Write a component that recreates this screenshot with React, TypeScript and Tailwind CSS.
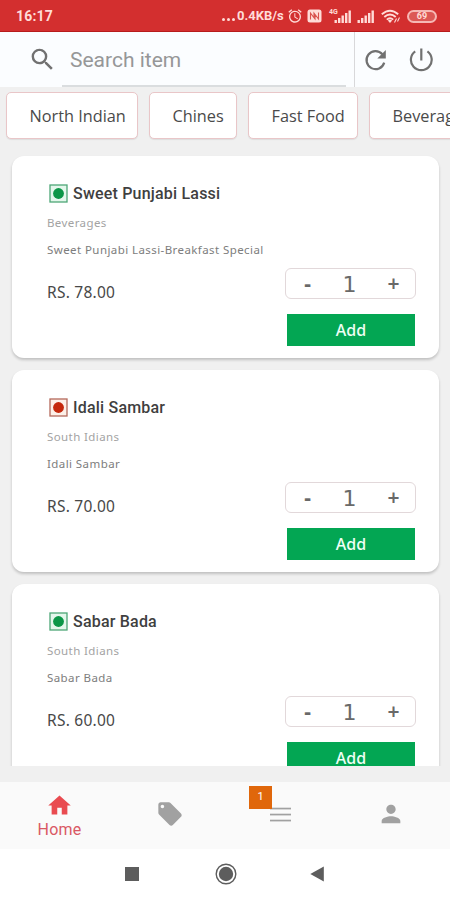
import { useState } from "react";
import {
    MdAlarm,
    MdHome,
    MdLocalOffer,
    MdPerson,
    MdSearch,
} from "react-icons/md";

const CATEGORIES = [
    { label: "North Indian", width: "w-[132px]" },
    { label: "Chines", width: "w-[88px]" },
    { label: "Fast Food", width: "w-[110px]" },
    { label: "Beverages", width: "w-[122px]" },
];

const ITEMS = [
    {
        name: "Sweet Punjabi Lassi",
        category: "Beverages",
        description: "Sweet Punjabi Lassi-Breakfast Special",
        price: "78.00",
        veg: true,
    },
    {
        name: "Idali Sambar",
        category: "South Idians",
        description: "Idali Sambar",
        price: "70.00",
        veg: false,
    },
    {
        name: "Sabar Bada",
        category: "South Idians",
        description: "Sabar Bada",
        price: "60.00",
        veg: true,
    },
];

type Item = (typeof ITEMS)[number];

function SignalBars() {
    return (
        <svg width="18" height="13" viewBox="0 0 18 13" fill="currentColor">
            <rect x="0.5" y="10" width="2.4" height="3" />
            <rect x="4" y="8" width="2.4" height="5" />
            <rect x="7.5" y="5.5" width="2.4" height="7.5" />
            <rect x="11" y="3" width="2.4" height="10" />
            <rect x="14.5" y="0.5" width="2.4" height="12.5" />
        </svg>
    );
}

function StatusBar() {
    return (
        <div className="flex h-8 shrink-0 items-center border-b border-[#b71c1c] bg-[#d32f2f] pt-px pr-[13px] pl-4 font-['Roboto',sans-serif] text-[#ffdcd8]">
            <span className="text-[14px] font-bold tracking-[0.2px]">16:17</span>
            <div className="ml-auto flex items-center">
                <span className="mr-[2px] flex gap-[2px] pt-[6px]">
                    <span className="size-[3px] rounded-full bg-current" />
                    <span className="size-[3px] rounded-full bg-current" />
                    <span className="size-[3px] rounded-full bg-current" />
                </span>
                <span className="w-[47px] text-[13px] font-bold whitespace-nowrap">
                    0.4KB/s
                </span>
                <MdAlarm className="ml-[3px] size-4" />
                <svg className="ml-[4px]" width="15" height="14" viewBox="0 0 15 14">
                    <rect x="0.5" y="0.5" width="14" height="13" rx="2.5" fill="currentColor" />
                    <path
                        d="M3.5 10.5V4.2L8 10V6M11.5 3.5V10L7 4.2V8"
                        fill="none"
                        stroke="#d9534f"
                        strokeWidth="1.1"
                    />
                </svg>
                <span className="relative ml-[12px] flex">
                    <span className="absolute -top-px -left-[5px] text-[7px] leading-none font-bold">
                        4G
                    </span>
                    <SignalBars />
                </span>
                <span className="ml-[5px] flex">
                    <SignalBars />
                </span>
                <svg className="ml-[6px]" width="20" height="15" viewBox="0 0 20 15">
                    <g fill="none" stroke="currentColor" strokeWidth="1.9">
                        <path d="M0.8 5.3Q9 -2 17.2 5.3" />
                        <path d="M3.3 8Q9 3 14.7 8" />
                        <path d="M5.8 10.6Q9 7.8 12.2 10.6" />
                    </g>
                    <path d="M6.8 11.6Q9 9.8 11.2 11.6L9 14Z" fill="currentColor" />
                    <path
                        d="M13.5 13.5L15.5 9.5M16.5 12.5L18.5 8.5"
                        stroke="currentColor"
                        strokeWidth="1.1"
                    />
                </svg>
                <span className="ml-[6px] flex h-[13px] w-[30px] items-center justify-center rounded-full border-2 border-[#f6b8b4] bg-[#dc5855] text-[9px] leading-none font-bold">
                    69
                </span>
            </div>
        </div>
    );
}

function SearchBar() {
    return (
        <div className="flex h-[55px] shrink-0 bg-[#fbfdff] text-[#717171]">
            <div className="flex w-[355px] border-r border-[#d8d8da] pr-2 pl-7">
                <MdSearch className="mt-[13px] size-[29px] shrink-0" />
                <div className="ml-[5px] flex-1 border-b-2 border-[#dadddf] pl-2 font-['Roboto',sans-serif] text-[21px] leading-[57px] text-[#969798]">
                    Search item
                </div>
            </div>
            <div className="flex flex-1 items-start pt-4 pl-[9px]">
                <svg width="24" height="24" viewBox="0 0 24 24">
                    <path
                        d="M18.4 6.3A9 9 0 1 0 20.2 14.6"
                        fill="none"
                        stroke="currentColor"
                        strokeWidth="2.2"
                    />
                    <path d="M21.8 2V10.5H13.3Z" fill="currentColor" />
                </svg>
                <svg className="ml-[21px]" width="24" height="24" viewBox="0 0 24 24">
                    <path
                        d="M6.2 3.4A10.4 10.4 0 1 0 18.4 3.4M12.3 0.5V12.5"
                        fill="none"
                        stroke="currentColor"
                        strokeWidth="2.2"
                    />
                </svg>
            </div>
        </div>
    );
}

function FoodMark({ veg }: { veg: boolean }) {
    const color = veg ? "#0b9647" : "#c5280c";
    return (
        <svg width="19" height="19" viewBox="0 0 19 19" className="shrink-0">
            <rect
                x="1"
                y="1"
                width="17"
                height="17"
                fill={veg ? "#e4f7ec" : "#fdf0e8"}
                stroke={veg ? "#4da777" : "#b4695b"}
                strokeWidth="1.3"
            />
            <circle cx="9.5" cy="9.5" r="5.4" fill={color} />
        </svg>
    );
}

function ItemCard({ item }: { item: Item }) {
    const [qty, setQty] = useState(1);

    return (
        <div className="flex h-[202px] shrink-0 flex-col rounded-xl bg-white pt-7 pr-[23px] pl-[35px] shadow-[0_2px_3px_rgba(0,0,0,0.2)]">
            <div className="flex h-5 items-center gap-[5px] pl-[2px]">
                <FoodMark veg={item.veg} />
                <h2 className="pt-px font-['Roboto',sans-serif] text-[16px] font-medium tracking-[0.2px] text-[#3f3f3f]">
                    {item.name}
                </h2>
            </div>
            <p className="mt-[10px] text-[11.5px] leading-[18px] tracking-[0.4px] text-[#a3a3a3]">
                {item.category}
            </p>
            <p className="mt-[9px] text-[11.5px] leading-[18px] tracking-[0.42px] text-[#7d7d7d]">
                {item.description}
            </p>
            <div className="mt-[9px] flex justify-between">
                <p className="mt-[13px] text-[15.5px] leading-[22px] tracking-[0.25px] text-[#484848]">
                    RS. {item.price}
                </p>
                <div className="w-[131px]">
                    <div className="grid h-[31px] grid-cols-3 items-center rounded-[6px] border border-[#e2d8da] text-center text-[#696969]">
                        <button
                            className="text-[21px] leading-[28px] font-bold"
                            onClick={() => setQty(Math.max(1, qty - 1))}
                        >
                            -
                        </button>
                        <span className="pt-[2px] pr-[2px] font-['DejaVu_Sans',sans-serif] text-[22px] leading-[27px]">
                            {qty}
                        </span>
                        <button
                            className="text-[21px] leading-[28px] font-semibold"
                            onClick={() => setQty(qty + 1)}
                        >
                            +
                        </button>
                    </div>
                    <button className="mt-[15px] ml-[2px] h-8 w-[128px] bg-[#03a653] text-[16px] font-medium text-[#effff5]">
                        Add
                    </button>
                </div>
            </div>
        </div>
    );
}

function BottomNav() {
    return (
        <nav className="flex h-[67px] shrink-0 bg-[#fafafa] text-[#a1a1a1]">
            <div className="flex w-[119px] flex-col items-center pt-[10px] text-[#e94b50]">
                <MdHome className="size-[27px]" />
                <span className="font-['Roboto',sans-serif] text-[16px] leading-[22px] tracking-[0.2px] text-[#d95864]">
                    Home
                </span>
            </div>
            <div className="flex w-[102px] justify-center pt-[18px]">
                <MdLocalOffer className="size-[28px]" />
            </div>
            <div className="flex w-[119px] justify-center pt-[25px]">
                <div className="relative">
                    <svg width="21" height="16" viewBox="0 0 21 16" fill="currentColor">
                        <rect width="21" height="1.7" y="0.7" />
                        <rect width="21" height="1.7" y="6.7" />
                        <rect width="21" height="1.7" y="12.7" />
                    </svg>
                    <span className="absolute -top-[21px] -left-[21px] flex size-[23px] items-center justify-center bg-[#e0670b] font-['Roboto',sans-serif] text-[11px] text-white">
                        1
                    </span>
                </div>
            </div>
            <div className="flex w-[102px] justify-center pt-[18px]">
                <MdPerson className="size-[28px]" />
            </div>
        </nav>
    );
}

function SystemNav() {
    return (
        <div className="flex h-[51px] shrink-0 items-center bg-white pb-[2px] pl-[125px] text-[#5d5d5d]">
            <span className="size-[14px] bg-current" />
            <svg className="ml-[76px]" width="22" height="22" viewBox="0 0 22 22">
                <circle cx="11" cy="11" r="9.8" fill="none" stroke="currentColor" strokeWidth="1.4" />
                <circle cx="11" cy="11" r="7.2" fill="currentColor" />
            </svg>
            <svg className="ml-[73px]" width="14" height="16" viewBox="0 0 14 16">
                <path d="M13.8 0.5V15.5L0.3 8Z" fill="currentColor" />
            </svg>
        </div>
    );
}

export default function App() {
    return (
        <div className="flex h-[900px] w-[450px] flex-col overflow-hidden bg-[#f0f0f0] font-['Noto_Sans',sans-serif]">
            <StatusBar />
            <SearchBar />
            <div className="flex h-[56px] shrink-0 gap-[11px] overflow-hidden pt-[5px] pl-[6px]">
                {CATEGORIES.map((category) => (
                    <button
                        key={category.label}
                        className={`h-[47px] shrink-0 rounded-[5px] border border-[#e9c6c8] bg-white pt-[2px] pl-[22.5px] text-left font-['Open_Sans',sans-serif] text-[16.3px] text-[#4a4a4a] shadow-[0_1px_1px_rgba(0,0,0,0.08)] ${category.width}`}
                    >
                        {category.label}
                    </button>
                ))}
            </div>
            <main className="flex h-[623px] shrink-0 flex-col gap-[12px] overflow-hidden pt-[12.5px] pr-[11px] pl-3">
                {ITEMS.map((item) => (
                    <ItemCard key={item.name} item={item} />
                ))}
            </main>
            <div className="h-4 shrink-0" />
            <BottomNav />
            <SystemNav />
        </div>
    );
}
